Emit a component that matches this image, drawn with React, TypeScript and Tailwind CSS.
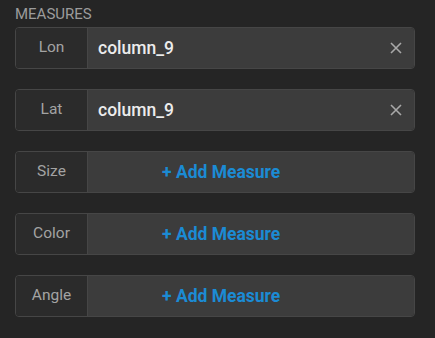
import React, { FC, ReactElement } from "react";

type Row = { label: string; value?: string };

const rows: Row[] = [
  { label: "Lon", value: "column_9" },
  { label: "Lat", value: "column_9" },
  { label: "Size" },
  { label: "Color" },
  { label: "Angle" },
];

const CloseIcon: FC = (): ReactElement => (
  <svg width="12" height="12" viewBox="0 0 12 12" fill="none">
    <path d="M1 1L11 11M11 1L1 11" stroke="#a8a8a8" strokeWidth="1.6" />
  </svg>
);

const MeasureRow: FC<{ row: Row }> = ({ row }): ReactElement => {
  return (
    <div className="flex h-[42px] w-[400px] rounded-[4px] border border-[#464646] overflow-hidden">
      <div className="w-[72px] flex items-center justify-center bg-[#2b2b2b] border-r border-[#464646] text-[15.5px] text-[#a3a3a3]">
        {row.label}
      </div>
      <div className="flex-1 flex items-center bg-[#3c3c3c]">
        {row.value ? (
          <>
            <span className="pl-[10px] text-[17.5px] font-medium text-[#ececec]">{row.value}</span>
            <span className="ml-auto mr-[12px] flex items-center">
              <CloseIcon />
            </span>
          </>
        ) : (
          <span className="pl-[74px] text-[17.5px] font-bold text-[#1b8bd4]">+ Add Measure</span>
        )}
      </div>
    </div>
  );
};

const App: FC = (): ReactElement => {
  return (
    <div className="w-[435px] h-[338px] bg-[#252525] px-[15px] pt-[5px] font-['Roboto',sans-serif]">
      <div className="text-[15px] leading-[18px] text-[#9c9c9c] mb-[4px]">MEASURES</div>
      <div className="flex flex-col gap-[20px]">
        {rows.map((r) => (
          <MeasureRow key={r.label} row={r} />
        ))}
      </div>
    </div>
  );
};

export default App;
